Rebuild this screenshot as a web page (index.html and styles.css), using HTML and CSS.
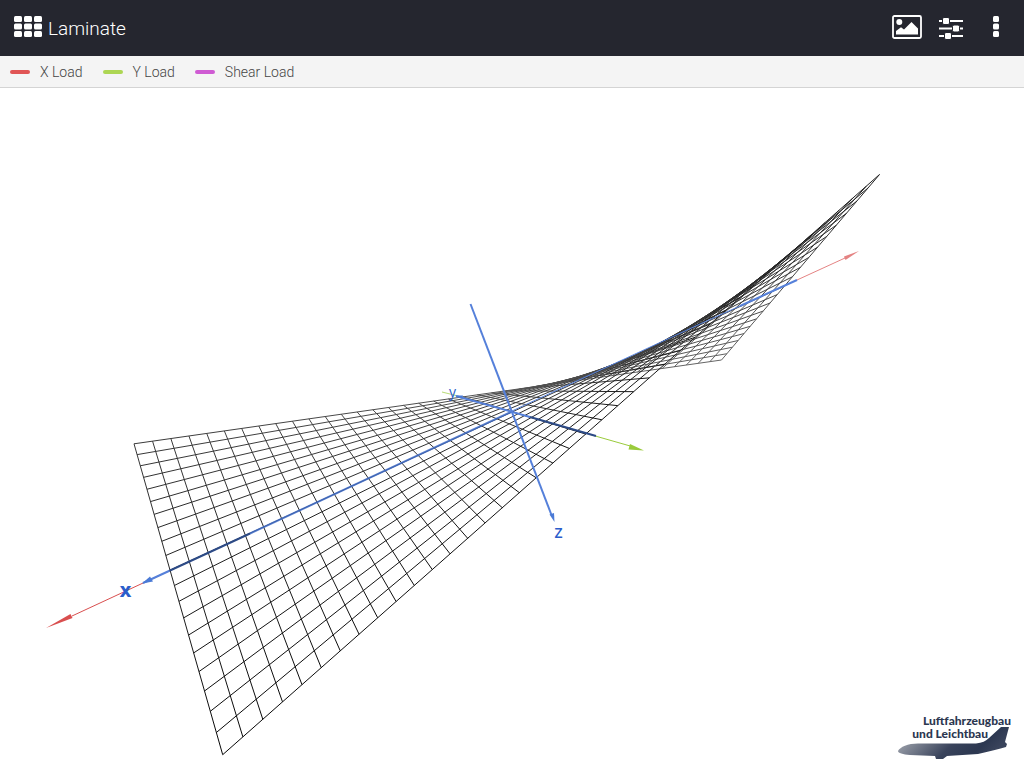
FILE: index.html
```html
<!DOCTYPE html>
<html lang="en">
<head>
<meta charset="utf-8">
<title>Laminate</title>
<link rel="stylesheet" href="styles.css">
</head>
<body>
<header class="bar">
  <button class="icon-button brand" type="button">
    <svg class="icon-grid" viewBox="0 0 28 21" aria-hidden="true">
      <g fill="currentColor">
        <rect x="0" y="0" width="8" height="6" rx="1.5"/><rect x="10" y="0" width="8" height="6" rx="1.5"/><rect x="20" y="0" width="8" height="6" rx="1.5"/>
        <rect x="0" y="7.5" width="8" height="6" rx="1.5"/><rect x="10" y="7.5" width="8" height="6" rx="1.5"/><rect x="20" y="7.5" width="8" height="6" rx="1.5"/>
        <rect x="0" y="15" width="8" height="6" rx="1.5"/><rect x="10" y="15" width="8" height="6" rx="1.5"/><rect x="20" y="15" width="8" height="6" rx="1.5"/>
      </g>
    </svg>
    <span class="title">Laminate</span>
  </button>
  <nav class="tools">
    <button class="icon-button" type="button" aria-label="Image">
      <svg class="icon-image" viewBox="0 0 30 24" aria-hidden="true">
        <rect x="1" y="1" width="28" height="22" rx="1.5" fill="none" stroke="currentColor" stroke-width="1.8"/>
        <circle cx="7.3" cy="7" r="3" fill="currentColor"/>
        <path d="M4 19.500V16L9 12.200L12 14.500L19.500 7L26 13.500V19.500Z" fill="currentColor"/>
      </svg>
    </button>
    <button class="icon-button" type="button" aria-label="Settings">
      <svg class="icon-sliders" viewBox="0 0 24 24" aria-hidden="true">
        <path d="M0 5H24M0 12.500H24M0 20H24" stroke="currentColor" stroke-width="1.8"/>
        <g fill="currentColor" stroke="#25262f" stroke-width="1">
          <rect x="3.500" y="1.500" width="7" height="7" rx="1.500"/><rect x="13.500" y="9" width="7" height="7" rx="1.500"/><rect x="5.500" y="16.500" width="7" height="7" rx="1.500"/>
        </g>
      </svg>
    </button>
    <button class="icon-button" type="button" aria-label="Menu">
      <svg class="icon-dots" viewBox="0 0 6 21" aria-hidden="true">
        <g fill="currentColor"><rect width="6" height="6" rx="1.500"/><rect y="7.500" width="6" height="6" rx="1.500"/><rect y="15" width="6" height="6" rx="1.500"/></g>
      </svg>
    </button>
  </nav>
</header>
<ul class="legend">
  <li class="legend-item"><span class="swatch swatch-x"></span>X Load</li>
  <li class="legend-item"><span class="swatch swatch-y"></span>Y Load</li>
  <li class="legend-item"><span class="swatch swatch-shear"></span>Shear Load</li>
</ul>
<main class="stage">
  <svg class="plot" viewBox="0 88 1024 680" role="img" aria-label="Deformed laminate">
    <g class="load-x">
      <path d="M72 616L170 570.500"/><path class="head" d="M46 628L70.500 614L72.500 618Z"/>
      <path class="far" d="M797 280L845 258"/><path class="head far" d="M859 251L844 256.500L845.500 260Z"/>
    </g>
    <g class="load-y">
      <path d="M590 434.500L632 446.500"/><path class="head" d="M644 450.500L630 444L628.500 449.500Z"/>
      <path class="far" d="M442 392L456 395.500"/>
    </g>
    <g class="axis">
      <path class="axis-x" d="M143 583L170 570.500"/>
    </g>
    <g id="mesh"></g>
    <g class="axis">
      <path class="axis-back" d="M512 411L620 361L700 324"/>
      <path class="axis-mid" d="M250 533.500L512 411.500"/>
      <path class="axis-deep" d="M170 570.500L250 533.500"/>
      <path class="axis-back" d="M700 324L740 306"/>
      <path d="M740 306L797 280"/>
      <path d="M456 396L530 417"/>
      <path class="axis-deep" d="M530 417L596 436"/>
      <path class="axis-z" d="M470.500 304L551.500 515"/>
      <path class="axis-head" d="M142 583.500L150 576.500L153 581.500Z"/>
      <path class="axis-head" d="M554.500 522L549.500 514.500L554 513Z"/>
      <path class="axis-head" d="M455 395.500L463 395.500L462 398.500Z"/>
    </g>
    <g class="axis-name">
      <text class="name-x" x="125.500" y="597">X</text>
      <text class="name-y" x="452.500" y="397">y</text>
      <text class="name-z" x="558.500" y="538">Z</text>
    </g>
  </svg>
  <div class="logo">
    <span class="logo-top">Luftfahrzeugbau</span>
    <span class="logo-bottom">und Leichtbau</span>
    <svg class="plane" viewBox="0 0 112 33" aria-hidden="true">
      <defs><linearGradient id="hull" x1="0" y1="0" x2="1" y2="0.3"><stop offset="0" stop-color="#b9bcc4"/><stop offset="0.250" stop-color="#858b98"/><stop offset="0.600" stop-color="#39435b"/><stop offset="0.850" stop-color="#2c3750"/><stop offset="1" stop-color="#39435b"/></linearGradient></defs>
      <path fill="url(#hull)" d="M0 24C2 20 10 16.500 20 16.500H78C84 16 88 14 91 11L103 0H111L107 15L109 17L108 20C100 22 90 25 80 27L49 29L45 32H38L37 29L12 28C5 27.500 0 26 0 24Z"/>
    </svg>
  </div>
</main>
<script src="mesh.js"></script>
</body>
</html>
```
FILE: styles.css
```css
* { box-sizing: border-box; }
body {
  margin: 0;
  min-height: 100vh;
  display: flex;
  flex-direction: column;
  background: #fff;
  font-family: Roboto, "Liberation Sans", sans-serif;
}
.bar {
  display: flex;
  align-items: center;
  justify-content: space-between;
  height: 56px;
  padding: 0 20px 0 14px;
  background: #25262f;
  color: #fff;
}
.icon-button {
  display: flex;
  align-items: center;
  padding: 0;
  border: 0;
  background: none;
  color: inherit;
  font: inherit;
}
.brand { gap: 6px; }
.icon-grid { width: 28px; height: 21px; margin-bottom: 3px; }
.title { padding-top: 1px; font-size: 19px; font-weight: 300; line-height: 24px; }
.tools { display: flex; align-items: center; }
.icon-image { width: 30px; height: 24px; margin: 0 17px 2px 0; }
.icon-sliders { width: 24px; height: 24px; margin-right: 30px; }
.icon-dots { width: 6px; height: 21px; margin: 0 5px 3px 0; }
.legend {
  display: flex;
  align-items: center;
  gap: 20px;
  height: 32px;
  margin: 0;
  padding: 0 10px;
  list-style: none;
  background: #f4f4f4;
  border-bottom: 1px solid #d4d4d4;
  color: #444;
  font-size: 14px;
  font-weight: 300;
}
.legend-item { display: flex; align-items: center; gap: 10px; }
.swatch { width: 20px; height: 4px; border-radius: 2px; }
.swatch-x { background: #e05555; }
.swatch-y { background: #add653; }
.swatch-shear { background: #cf5bd3; }
.stage { flex: 1; display: grid; min-height: 0; }
.plot { grid-area: 1 / 1; width: 100%; height: auto; }
.load-x { stroke: #d94f4f; fill: none; }
.load-y { stroke: #9acb3c; fill: none; }
.load-x .head { fill: #d94f4f; stroke: none; }
.load-y .head { fill: #9acb3c; stroke: none; }
.far { opacity: 0.7; }
.axis { fill: none; stroke: #5580da; stroke-width: 2px; }
.axis .axis-back { stroke-width: 1px; }
.axis .axis-mid { stroke: #3f6cc8; opacity: 0.85; }
.axis .axis-deep { stroke: #2c4a86; }
.axis .axis-head { fill: #4a7ad6; stroke: none; }
.axis-name { fill: #2a5dcb; text-anchor: middle; font-family: "Open Sans", sans-serif; }
.name-x { font-size: 16px; font-weight: 800; }
.name-y { font-size: 14px; font-weight: 400; }
.name-z { font-size: 14px; font-weight: 600; }
.logo {
  grid-area: 1 / 1;
  align-self: end;
  justify-self: end;
  display: flex;
  flex-direction: column;
  align-items: flex-end;
  padding: 0 13px 8px 0;
  color: #2c3750;
  font-family: Lato, sans-serif;
  font-size: 12px;
  font-weight: 900;
  line-height: 13px;
}
.logo-bottom { margin-right: 23px; }
.plane { width: 114px; height: 33px; margin-top: -13px; }
```
FILE: mesh.js
```js
// Corners of the twisted plate: screen position and relative depth.
const A = [134, 443.8, 1];
const B = [222.7, 754.7, 0.685];
const C = [879.5, 174.5, 0.8463];
const D = [721.5, 360, 1.272];
const NS = 'http://www.w3.org/2000/svg';
const mesh = document.getElementById('mesh');

function point(u, v) {
  const weights = [(1 - u) * (1 - v), (1 - u) * v, u * v, u * (1 - v)];
  let x = 0, y = 0, w = 0;
  [A, B, C, D].forEach((p, i) => {
    const k = weights[i] * p[2];
    x += k * p[0];
    y += k * p[1];
    w += k;
  });
  return { x: x / w, y: y / w, depth: w };
}

function shade(depth) {
  const g = Math.round(Math.max(0, Math.min(110, 5 + (depth - 0.685) * 165)));
  return `rgb(${g},${g},${g})`;
}

function element(name, attributes, parent) {
  const e = document.createElementNS(NS, name);
  for (const key in attributes) e.setAttribute(key, attributes[key]);
  parent.appendChild(e);
  return e;
}

let count = 0;
function rule(p, q) {
  const id = 'rule' + count++;
  const ends = { x1: p.x, y1: p.y, x2: q.x, y2: q.y };
  const fade = element('linearGradient', { id, gradientUnits: 'userSpaceOnUse', ...ends }, mesh);
  element('stop', { offset: 0, 'stop-color': shade(p.depth) }, fade);
  element('stop', { offset: 1, 'stop-color': shade(q.depth) }, fade);
  element('line', { ...ends, stroke: `url(#${id})`, 'stroke-width': 1 }, mesh);
}

for (let i = 0; i <= 20; i++) rule(point(0, i / 20), point(1, i / 20));
for (let i = 0; i <= 40; i++) rule(point(i / 40, 0), point(i / 40, 1));
```
